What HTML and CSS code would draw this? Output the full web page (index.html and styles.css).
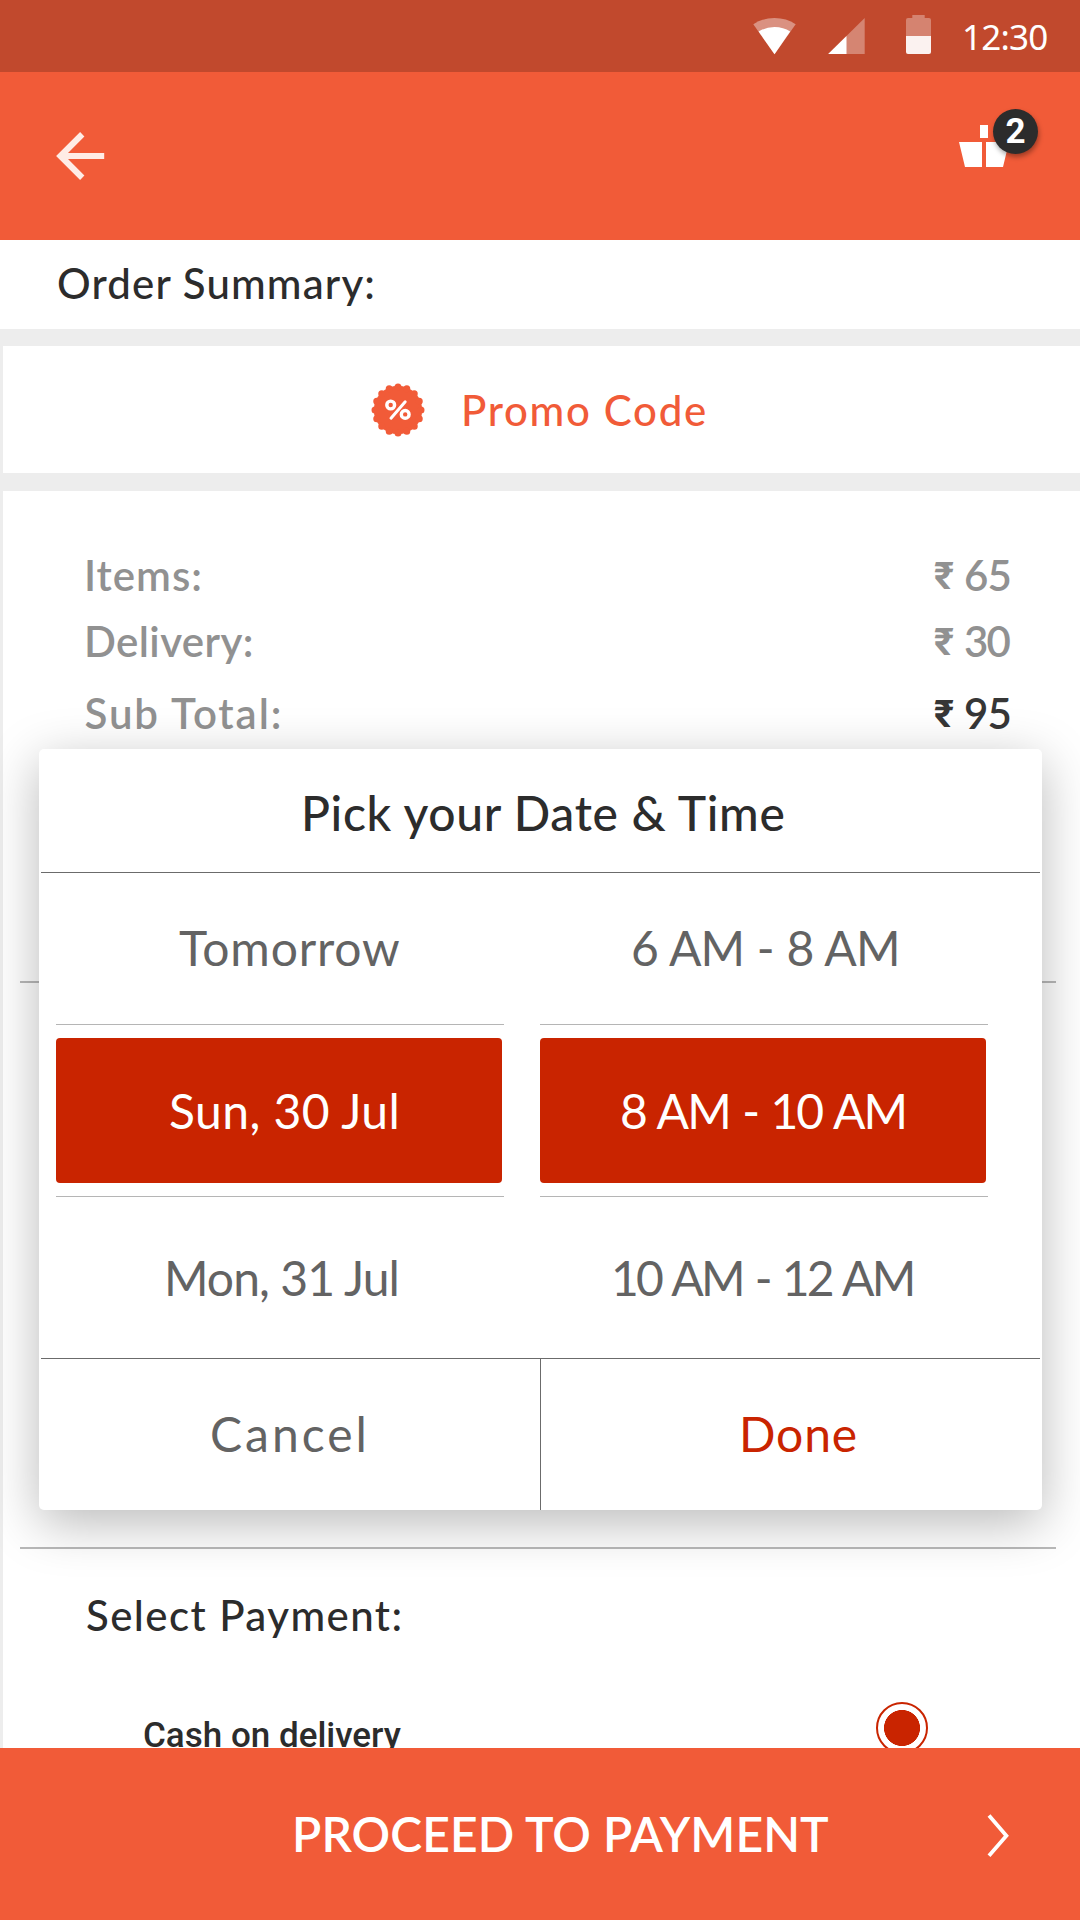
FILE: index.html
```html
<!DOCTYPE html>
<html lang="en">
<head>
<meta charset="utf-8">
<title>Order Summary</title>
<link rel="stylesheet" href="styles.css">
</head>
<body>
<div class="screen">
  <div class="status-bar">
    <svg class="icon-wifi" width="43" height="37" viewBox="0 0 43 37">
      <path d="M0.3 6.2Q9.5 0 21.5 0T42.7 6.2L21.5 36.3Z" fill="#fff" fill-opacity=".4"/>
      <path d="M5.6 13.6Q12.5 9 21.5 9T37.2 13.6L21.5 36.3Z" fill="#fff"/>
    </svg>
    <svg class="icon-signal" width="37" height="37" viewBox="0 0 37 37">
      <path d="M36.7 0V36H.2Z" fill="#fff" fill-opacity=".33"/>
      <path d="M18.5 18V36H.2Z" fill="#fff"/>
    </svg>
    <svg class="icon-battery" width="25" height="39" viewBox="0 0 25 39">
      <path d="M6.3 0H18.7V3H23Q25 3 25 5V21H0V5Q0 3 2 3H6.3Z" fill="#fff" fill-opacity=".32"/>
      <path d="M0 21H25V37Q25 39 23 39H2Q0 39 0 37Z" fill="#fff" fill-opacity=".93"/>
    </svg>
    <span class="clock">12:30</span>
  </div>

  <header class="app-bar">
    <svg class="icon-back" width="49" height="48" viewBox="0 0 49 48">
      <path d="M48.2 21H12L28.4 4.4 24.1 0 .1 24 24.1 48 28.4 43.6 12 27H48.2Z" fill="#ffece6"/>
    </svg>
    <div class="basket">
      <svg class="icon-basket" width="50" height="42" viewBox="0 0 50 42">
        <path d="M21 0H29V13H21ZM0 17H23V42H6ZM27 17H50L44 42H27Z" fill="#fff"/>
      </svg>
      <span class="basket-count">2</span>
    </div>
  </header>

  <h1 class="page-title">Order Summary:</h1>

  <main class="content">
    <div class="promo">
      <svg class="icon-promo" width="54" height="54" viewBox="-27 -27 54 54">
        <circle r="24.2" fill="#f15b38"/>
        <circle r="23" fill="none" stroke="#f15b38" stroke-width="7" stroke-linecap="round" pathLength="160" stroke-dasharray="0 10"/>
        <g fill="none" stroke="#fff" stroke-width="3.4">
          <circle cx="-7.3" cy="-5" r="3.9"/>
          <circle cx="7.2" cy="4.4" r="3.9"/>
          <path d="M7.2-8.2-7 8.2" stroke-width="3" stroke-linecap="round"/>
        </g>
      </svg>
      <span class="promo-label">Promo Code</span>
    </div>

    <section class="bill">
      <div class="bill-row"><span class="items">Items:</span><span class="amount"><span class="rupee">₹</span>65</span></div>
      <div class="bill-row"><span class="delivery">Delivery:</span><span class="amount zero"><span class="rupee">₹</span>30</span></div>
      <div class="bill-row subtotal"><span class="sub-label">Sub Total:</span><span class="amount total"><span class="rupee">₹</span>95</span></div>
      <hr class="rule rule-schedule">
      <hr class="rule rule-payment">
      <h2 class="payment-title">Select Payment:</h2>
      <div class="payment-option">
        <span>Cash on delivery</span>
        <span class="radio"></span>
      </div>
    </section>
  </main>

  <footer class="proceed">
    <span class="proceed-label">PROCEED TO PAYMENT</span>
    <svg class="icon-next" width="23" height="44" viewBox="0 0 23 44">
      <path d="M2 1.6 19.4 21.7 2 41.8" fill="none" stroke="#fff" stroke-width="3.8"/>
    </svg>
  </footer>

  <div class="picker">
    <div class="picker-title">Pick your Date &amp; Time</div>
    <div class="picker-columns">
      <div class="picker-column">
        <div class="option before tomorrow">Tomorrow</div>
        <div class="option selected sunday">Sun, 30 Jul</div>
        <div class="option after monday">Mon, 31 Jul</div>
      </div>
      <div class="picker-column">
        <div class="option before slot-6">6 AM - 8 AM</div>
        <div class="option selected slot-8">8 AM - 10 AM</div>
        <div class="option after slot-10">10 AM - 12 AM</div>
      </div>
    </div>
    <div class="picker-actions">
      <div class="action cancel">Cancel</div>
      <div class="action done">Done</div>
    </div>
  </div>
</div>
</body>
</html>
```
FILE: styles.css
```css
* { box-sizing: border-box; }

body {
  margin: 0;
  font-family: Lato, "Liberation Sans", sans-serif;
  color: #2c2c2c;
  background: #ededed;
}

svg { display: block; flex: none; }

.screen {
  position: relative;
  width: 1080px;
  height: 1920px;
  overflow: hidden;
  display: flex;
  flex-direction: column;
  white-space: nowrap;
}

/* Status bar */
.status-bar {
  flex: none;
  height: 72px;
  display: flex;
  align-items: flex-start;
  padding-left: 753px;
  background: #c1492d;
}
.icon-wifi { margin-top: 18px; }
.icon-signal { margin: 18px 0 0 32px; }
.icon-battery { margin: 15px 0 0 41px; }
.clock {
  margin-left: 31px;
  font: 35px/74px "Noto Sans", sans-serif;
  letter-spacing: -.8px;
  color: #fff;
}

/* App bar */
.app-bar {
  flex: none;
  height: 168px;
  display: flex;
  justify-content: space-between;
  align-items: flex-start;
  padding: 60px 71px 0 56px;
  background: #f15b38;
}
.basket { position: relative; margin-top: -7px; }
.basket-count {
  position: absolute;
  left: 34px;
  top: -16px;
  width: 45px;
  height: 45px;
  border-radius: 50%;
  background: #2c2c2c;
  box-shadow: 1px 3px 5px rgba(0, 0, 0, .35);
  color: #fff;
  font: 700 35px/46px Roboto, sans-serif;
  text-align: center;
}

.page-title {
  flex: none;
  height: 89px;
  margin: 0;
  padding-left: 57px;
  background: #fff;
  font-size: 42px;
  font-weight: 500;
  line-height: 86px;
  letter-spacing: 1.15px;
}

/* Content cards */
.content {
  flex: 1;
  min-height: 0;
  overflow: hidden;
  padding: 17px 0 0 3px;
}
.promo {
  height: 127px;
  display: flex;
  align-items: center;
  padding-left: 367.5px;
  background: #fff;
  color: #f15b38;
}
.promo-label {
  margin-left: 36.5px;
  font-size: 42px;
  font-weight: 500;
  line-height: 126px;
  letter-spacing: 1.68px;
}
.bill {
  height: 1300px;
  margin-top: 18px;
  padding-top: 51px;
  background: #fff;
}
.bill-row {
  display: flex;
  justify-content: space-between;
  height: 66px;
  padding: 0 0 0 81px;
  font-size: 42px;
  font-weight: 600;
  line-height: 66px;
  color: #919191;
}
.subtotal { margin-top: 6px; }
.items { letter-spacing: 1.01px; }
.delivery { letter-spacing: .4px; }
.sub-label { letter-spacing: 1.9px; padding-left: .5px; }
.amount {
  display: flex;
  width: 146px;
  letter-spacing: -.9px;
}
.zero { letter-spacing: -1.8px; }
.total { color: #363636; }
.rupee {
  width: 30px;
  padding-top: 1px;
  font-family: Roboto, sans-serif;
  font-size: 38px;
  font-weight: 700;
  letter-spacing: 0;
}

.rule {
  width: 1036px;
  height: 2px;
  margin: 0 0 0 17px;
  border: 0;
  background: #b9b9b9;
}
.rule-schedule { margin-top: 235px; }
.rule-payment { margin-top: 564px; }

.payment-title {
  margin: 36px 0 0 83px;
  font-size: 42px;
  font-weight: 500;
  line-height: 60px;
  letter-spacing: 1.43px;
}
.payment-option {
  display: flex;
  justify-content: space-between;
  align-items: flex-start;
  margin-top: 57px;
  padding: 0 152px 0 140px;
  font: 500 35px/68px Roboto, sans-serif;
}
.radio {
  width: 52px;
  height: 52px;
  border: 2px solid #c92400;
  border-radius: 50%;
  background: radial-gradient(circle, #c92400 17.7px, #fff 18.3px);
}

/* Footer */
.proceed {
  flex: none;
  height: 172px;
  display: flex;
  align-items: flex-start;
  justify-content: space-between;
  padding: 0 70px 0 292px;
  background: #f15b38;
  color: #fff;
}
.proceed-label {
  font-size: 48px;
  font-weight: 600;
  line-height: 171px;
  letter-spacing: .1px;
}
.icon-next { margin-top: 66px; }

/* Date and time dialog */
.picker {
  position: absolute;
  left: 39px;
  top: 749px;
  width: 1003px;
  height: 761px;
  border-radius: 5px;
  background: #fff;
  box-shadow: 0 13px 52px rgba(0, 0, 0, .28);
  font-size: 48px;
  color: #636363;
}
.picker-title {
  height: 123px;
  padding-left: 262px;
  line-height: 127px;
  font-weight: 500;
  letter-spacing: .66px;
  color: #2c2c2c;
}
.picker-columns {
  display: grid;
  grid-template-columns: 448px 448px;
  column-gap: 36px;
  margin: 0 2px;
  padding-left: 15px;
  border-top: 1px solid #6b6b6b;
}
.before {
  height: 152px;
  line-height: 149px;
  border-bottom: 1px solid #b5b5b5;
}
.selected {
  width: 446px;
  height: 145px;
  margin: 13px 0;
  border-radius: 4px;
  background: #c92400;
  color: #fff;
  line-height: 145px;
}
.after {
  height: 162px;
  line-height: 161px;
  border-top: 1px solid #b5b5b5;
}
.tomorrow { padding-left: 123px; letter-spacing: .83px; }
.sunday { padding-left: 113px; letter-spacing: .43px; }
.monday { padding-left: 108px; letter-spacing: -.95px; }
.slot-6 { padding-left: 91px; letter-spacing: -.8px; word-spacing: 1px; }
.slot-8 { padding-left: 80px; letter-spacing: -1.9px; word-spacing: 1.9px; }
.slot-10 { padding-left: 71px; letter-spacing: -2.8px; word-spacing: 2.4px; }

.picker-actions {
  display: grid;
  grid-template-columns: 499px 1fr;
  height: 152px;
  margin: 0 2px;
  border-top: 1px solid #6b6b6b;
  line-height: 149px;
}
.cancel { padding-left: 169px; letter-spacing: 3px; }
.done {
  padding-left: 198px;
  border-left: 1px solid #6b6b6b;
  letter-spacing: .88px;
  color: #c92400;
}
```
